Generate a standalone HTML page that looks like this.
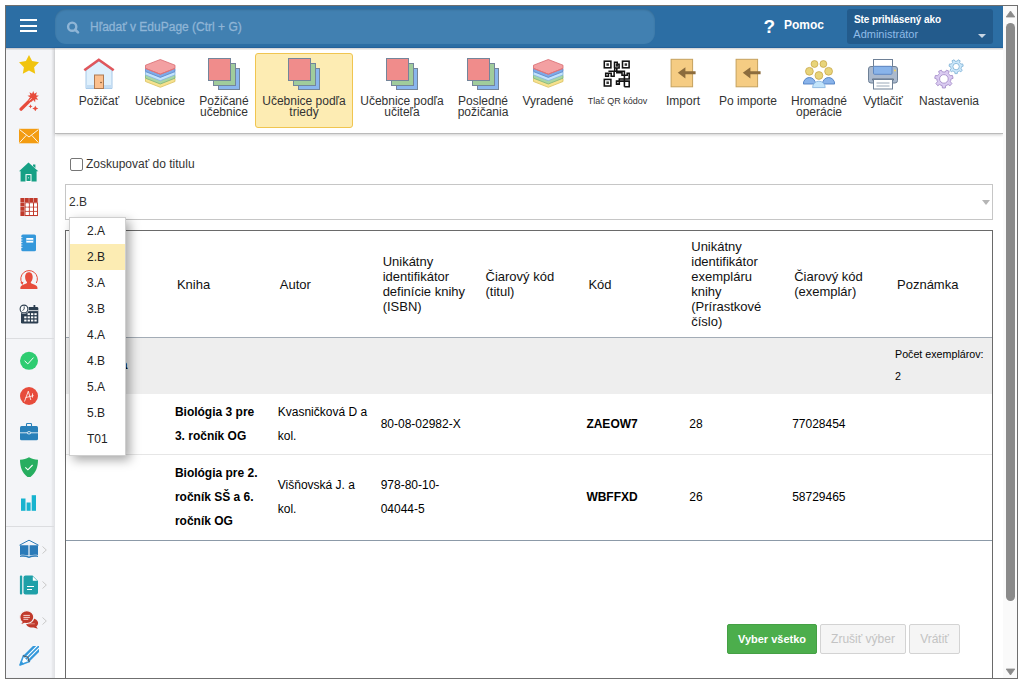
<!DOCTYPE html>
<html><head><meta charset="utf-8">
<style>
*{box-sizing:border-box;margin:0;padding:0}
html,body{width:1023px;height:684px;overflow:hidden;background:#fff;font-family:"Liberation Sans",sans-serif;color:#333}
.abs{position:absolute}
#frame{position:absolute;left:5px;top:5px;width:1013px;height:674px;border:1px solid #6f6f6f;overflow:hidden}
#hdr{position:absolute;left:6px;top:6px;width:997px;height:42px;background:#2c6ea4;border-bottom:1px solid #2565a0;box-shadow:0 1px 1px rgba(0,0,0,0.18)}
.ham{position:absolute;left:14px;width:17px;height:2px;background:#fff}
#search{position:absolute;left:55px;top:9px;width:600px;height:35px;border-radius:11px;background:#4180b1;box-shadow:inset 0 1px 2px rgba(0,0,0,0.15)}
#search .ph{position:absolute;left:35px;top:10.7px;font-size:12px;color:#8fb5d6;-webkit-text-stroke:0.3px #8fb5d6;white-space:nowrap}
#help{position:absolute;left:763.5px;top:15.7px;font-size:19px;line-height:22px;font-weight:bold;color:#fff}
#pomoc{position:absolute;left:784px;top:18px;font-size:12px;font-weight:bold;color:#fff}
#user{position:absolute;left:847px;top:9px;width:146px;height:35px;background:#235b8c;border-radius:3px}
#user .l1{position:absolute;left:7px;top:5px;font-size:10px;font-weight:bold;color:#fff;white-space:nowrap;letter-spacing:-0.08px}
#user .l2{position:absolute;left:6.3px;top:19px;font-size:11px;color:#90bbe8;white-space:nowrap}
#user .tri{position:absolute;left:130.5px;top:24.5px;width:0;height:0;border-left:4px solid transparent;border-right:4px solid transparent;border-top:4px solid #c9d6e3}
#side{position:absolute;left:6px;top:48px;width:49px;height:630px;background:#f4f5f8;box-shadow:inset -2px 0 2px rgba(0,0,0,0.06);border-right:1px solid #e2e3e6}
.sic{position:absolute;left:13px;width:20px;height:20px}
.sep{position:absolute;left:0;width:48px;height:1px;background:#dcdde0}
.chev{position:absolute;left:36px;width:5px;height:8px}
#tb{position:absolute;left:55px;top:48px;width:948px;height:86px;background:#fff;border-bottom:1px solid #bababa;box-shadow:0 1px 3px rgba(0,0,0,0.2)}
.ti{position:absolute;top:48px;height:85px;text-align:center;font-size:12px;line-height:11px;color:#333}
.ti svg{position:absolute;top:10px;left:50%;margin-left:-16px;width:32px;height:32px}
.ti .lb{position:absolute;left:0;right:0;top:48px;white-space:nowrap}
.sel{background:#fdecb3;border:1px solid #f0c550;border-radius:3px}
#chk{position:absolute;left:70px;top:158px;width:13px;height:13px;border:1px solid #767676;border-radius:2px;background:#fff}
#chkl{position:absolute;left:86px;top:157px;font-size:12px;color:#333}
#select{position:absolute;left:65px;top:184px;width:928px;height:36px;border:1px solid #c6c6c6;background:#fff}
#select .v{position:absolute;left:3px;top:10px;font-size:12px;color:#333}
#select .tri{position:absolute;left:916px;top:15px;width:0;height:0;border-left:4px solid transparent;border-right:4px solid transparent;border-top:5px solid #b5b5b5}
#panel{position:absolute;left:65px;top:230px;width:928px;height:460px;border:1px solid #6a6a6a}
table{border-collapse:collapse;table-layout:fixed;width:926px}
th{font-weight:normal;font-size:13px;line-height:15px;color:#111;text-align:left;padding:8px 8px 8px 8px;vertical-align:middle;height:106px;border-bottom:1px solid #a3acb6}
td{white-space:nowrap;font-size:12px;line-height:24px;color:#000;padding:6px 4px 6px 6px;vertical-align:middle;border-bottom:1px solid #e6e6e6}
tr.grp td{background:#eeeeee;border-bottom:0;font-size:10.7px;line-height:22px;white-space:nowrap;padding-top:5px;padding-bottom:7px}
tr.last td{border-bottom:1px solid #8c9aa8;padding-bottom:7px}
b{font-weight:bold}
#dd{position:absolute;left:69px;top:217px;width:57px;height:239px;background:#fff;border:1px solid #cfcfcf;box-shadow:4px 4px 10px rgba(0,0,0,0.35)}
#dd div{height:26px;line-height:26px;padding-left:17px;font-size:12px;color:#222}
#dd div.hl{background:#fcecb3}
.btn{position:absolute;top:624px;height:30px;font-size:12px;line-height:28px;text-align:center;border-radius:2px}
#scroll{position:absolute;left:1003px;top:6px;width:14px;height:672px;background:#fafafa}
</style></head><body>
<div id="frame"></div>
<div id="clip" style="position:absolute;left:0;top:0;width:1023px;height:684px;clip-path:inset(6px 6px 6px 6px)">
<div id="hdr">
  <div class="ham" style="top:13px"></div>
  <div class="ham" style="top:18.5px"></div>
  <div class="ham" style="top:24px"></div>
</div>
<div id="search">
  <svg class="abs" style="left:11px;top:11px" width="16" height="16" viewBox="0 0 16 16"><circle cx="6.2" cy="6.7" r="4.1" fill="none" stroke="#8fb5d6" stroke-width="2.4"/><line x1="9.2" y1="9.7" x2="12" y2="12.4" stroke="#8fb5d6" stroke-width="2.6" stroke-linecap="round"/></svg>
  <div class="ph">Hľadať v EduPage (Ctrl + G)</div>
</div>
<div id="help">?</div>
<div id="pomoc">Pomoc</div>
<div id="user"><div class="l1">Ste prihlásený ako</div><div class="l2">Administrátor</div><div class="tri"></div></div>

<div id="side"></div>
<div id="sidei" style="position:absolute;left:6px;top:0;width:49px;height:684px">
<svg class="sic" style="top:55px" viewBox="0 0 20 20"><path fill="#f1c40f" d="M10,0 L13.1,6 L20,7.3 L15.1,12.2 L16.2,18.7 L10,15.6 L3.8,18.7 L4.9,12.2 L0,7.3 L6.9,6 Z"/></svg>
<svg class="sic" style="top:90.5px" viewBox="0 0 20 20"><g fill="#e74c3c"><path d="M14.20,0.00 L15.29,2.79 L17.93,1.36 L16.97,4.20 L19.91,4.79 L17.35,6.36 L19.22,8.70 L16.26,8.25 L16.18,11.25 L14.20,9.00 L12.22,11.25 L12.14,8.25 L9.18,8.70 L11.05,6.36 L8.49,4.79 L11.43,4.20 L10.47,1.36 L13.11,2.79 Z"/><path d="M11.5,13.2 l0.6,1.5 1.5,0.6 -1.5,0.6 -0.6,1.5 -0.6,-1.5 -1.5,-0.6 1.5,-0.6 Z"/><path d="M16.3,14.5 l0.9,2.1 2.1,0.9 -2.1,0.9 -0.9,2.1 -0.9,-2.1 -2.1,-0.9 2.1,-0.9 Z"/></g><line x1="2.1" y1="18.2" x2="12" y2="8.3" stroke="#e74c3c" stroke-width="3.3" stroke-linecap="round"/><path d="M10.2,9.6 L12.6,7.2" stroke="#fff" stroke-width="0.8"/></svg>
<svg class="sic" style="top:125.7px" viewBox="0 0 20 20"><rect x="0" y="2.8" width="20" height="14.5" fill="#f39c12"/><path d="M0.6,3.6 L10,11 L19.4,3.6 M0.6,16.6 L7.3,9.3 M19.4,16.6 L12.7,9.3" fill="none" stroke="#fff" stroke-width="0.9"/></svg>
<svg class="sic" style="top:161.5px" viewBox="0 0 20 20"><path fill="#16a085" d="M9.5,0.5 L19.3,9.3 L17.6,9.3 L17.6,19.5 L1.6,19.5 L1.6,9.3 L0,9.3 Z M14,2.5 L16.4,2.5 L16.4,6 L14,4 Z"/><rect x="7" y="12.6" width="5" height="6.9" fill="none" stroke="#fff" stroke-width="1"/><circle cx="9.5" cy="15.8" r="0.5" fill="#fff"/></svg>
<svg class="sic" style="top:197.4px" viewBox="0 0 20 20"><g fill="#c0392b"><rect x="1.4" y="1" width="4" height="4"/><rect x="5.8" y="1" width="4" height="4"/><rect x="10.2" y="1" width="4" height="4"/><rect x="14.6" y="1" width="4" height="4"/><rect x="1.4" y="5.4" width="4" height="4"/><rect x="1.4" y="9.8" width="4" height="4"/><rect x="1.4" y="14.2" width="4" height="4.8"/></g><g fill="none" stroke="#c0392b" stroke-width="1.1"><rect x="6.1" y="5.8" width="12.3" height="12.7"/><path d="M10.2,5.8 V18.5 M14.5,5.8 V18.5 M6.1,10 H18.4 M6.1,14.3 H18.4"/></g><g fill="#fff"><rect x="6.8" y="6.5" width="3" height="3"/><rect x="11" y="6.5" width="3" height="3"/><rect x="15" y="6.5" width="3" height="3"/><rect x="6.8" y="10.8" width="3" height="3"/><rect x="11" y="10.8" width="3" height="3"/><rect x="15" y="10.8" width="3" height="3"/><rect x="6.8" y="15" width="3" height="3"/><rect x="11" y="15" width="3" height="3"/><rect x="15" y="15" width="3" height="3"/></g></svg>
<svg class="sic" style="top:233px" viewBox="0 0 20 20"><rect x="2.3" y="1.5" width="14.7" height="16.8" rx="1.6" fill="#3498db"/><rect x="7.3" y="5" width="7" height="4.6" fill="#fff"/><path d="M7.3,7.3 H14.3" stroke="#3498db" stroke-width="0.9"/><path d="M1.5,4.5 H3.5 M1.5,7 H3.5 M1.5,9.5 H3.5 M1.5,12 H3.5 M1.5,14.5 H3.5" stroke="#fff" stroke-width="0.7"/></svg>
<svg class="sic" style="top:269px" viewBox="0 0 20 20"><path fill="#e74c3c" d="M9.9,3.2 C12.6,3.2 13.7,5.5 13.7,8 C13.7,10.3 12.9,12 11.8,13.1 C11.6,13.6 11.8,14.1 12.5,14.5 C15.3,15.4 17.5,16.5 18.2,17.8 C18.5,18.5 18.5,19.3 18.4,20 L1.4,20 C1.3,19.3 1.3,18.5 1.6,17.8 C2.3,16.5 4.5,15.4 7.3,14.5 C8,14.1 8.2,13.6 8,13.1 C6.9,12 6.1,10.3 6.1,8 C6.1,5.5 7.2,3.2 9.9,3.2 Z"/><path d="M3,14.2 A8.3,8.3 0 1,1 17.3,14" fill="none" stroke="#e74c3c" stroke-width="1"/><path d="M1.3,13.5 L3.5,16 L4.5,12.8 Z" fill="#e74c3c"/></svg>
<svg class="sic" style="top:304.4px" viewBox="0 0 20 20"><rect x="2" y="3" width="17.3" height="16.6" rx="1.3" fill="#2c3e50"/><rect x="14.5" y="1" width="1.8" height="3.2" fill="#2c3e50"/><path d="M8,6.6 H19.3" stroke="#fff" stroke-width="0.8"/><g fill="#fff"><rect x="8.6" y="9.2" width="2.3" height="1.9"/><rect x="12.0" y="9.2" width="2.3" height="1.9"/><rect x="15.4" y="9.2" width="2.3" height="1.9"/><rect x="5.2" y="12.4" width="2.3" height="1.9"/><rect x="8.6" y="12.4" width="2.3" height="1.9"/><rect x="12.0" y="12.4" width="2.3" height="1.9"/><rect x="15.4" y="12.4" width="2.3" height="1.9"/><rect x="5.2" y="15.6" width="2.3" height="1.9"/><rect x="8.6" y="15.6" width="2.3" height="1.9"/><rect x="12.0" y="15.6" width="2.3" height="1.9"/><rect x="15.4" y="15.6" width="2.3" height="1.9"/></g><circle cx="5" cy="5" r="4.9" fill="#fff"/><circle cx="5" cy="5" r="3.9" fill="#fff" stroke="#2c3e50" stroke-width="1.1"/><path d="M5.2,2.4 V5 L3.6,6.8" fill="none" stroke="#2c3e50" stroke-width="0.9"/></svg>
<div class="sep" style="top:338px"></div>
<svg class="sic" style="top:350.8px" viewBox="0 0 20 20"><circle cx="10" cy="9.8" r="9" fill="#2ecc71"/><path d="M5.6,9.8 L8.8,12.9 L14.5,6.6" fill="none" stroke="#fff" stroke-width="1"/></svg>
<svg class="sic" style="top:386.8px" viewBox="0 0 20 20"><circle cx="10" cy="9" r="9" fill="#e74c3c"/><path d="M5.5,14.5 L9.3,4.2 L11.8,13 M6.6,10.6 C9,9.8 11.5,9.5 14.6,8.6 M13.5,6.4 V10.6" fill="none" stroke="#fff" stroke-width="0.8"/></svg>
<svg class="sic" style="top:422px" viewBox="0 0 20 20"><path d="M7.5,4 V2.3 Q7.5,1.5 8.3,1.5 H11.7 Q12.5,1.5 12.5,2.3 V4" fill="none" stroke="#2980b9" stroke-width="1.1"/><rect x="1" y="4" width="18" height="14.3" rx="1.5" fill="#2980b9"/><path d="M1,10.8 H19" stroke="#fff" stroke-width="0.8"/><ellipse cx="10" cy="10.8" rx="1.8" ry="1.2" fill="#2980b9" stroke="#fff" stroke-width="0.8"/></svg>
<svg class="sic" style="top:456.5px" viewBox="0 0 20 20"><path fill="#27ae60" d="M10,0.2 C12.6,1.8 15.6,2.6 19,2.8 C19,10.5 16.7,16.8 10,21 C3.3,16.8 1,10.5 1,2.8 C4.4,2.6 7.4,1.8 10,0.2 Z"/><path d="M6.3,10.3 L8.9,12.8 L13.6,8" fill="none" stroke="#fff" stroke-width="1.1"/></svg>
<svg class="sic" style="top:492.8px" viewBox="0 0 20 20"><g fill="#17b3cf"><rect x="2" y="5.5" width="4.5" height="12.3"/><rect x="7.6" y="9.5" width="4" height="8.3"/><rect x="12.7" y="2.2" width="4.3" height="15.6"/></g></svg>
<div class="sep" style="top:526px"></div>
<svg class="sic" style="top:538.8px" viewBox="0 0 20 20"><path d="M0.5,6.2 L10,1.2 L19.5,6.2" fill="none" stroke="#2a7ab8" stroke-width="1"/><path fill="#2a7ab8" d="M1,6.2 H9.4 V16.5 C6.5,15.5 3.5,15.5 1,16 Z M10.6,6.2 H19 V16 C16.5,15.5 13.5,15.5 10.6,16.5 Z"/><path fill="#2a7ab8" d="M1,16.8 C4,16 7,16.2 10,17.5 C13,16.2 16,16 19,16.8 V18 C16,17.5 13,17.6 10,19 C7,17.6 4,17.5 1,18 Z"/></svg>
<svg class="sic" style="top:574.5px" viewBox="0 0 20 20"><rect x="0.9" y="0.5" width="2.3" height="19" rx="1" fill="#1fa0a8"/><path fill="#1fa0a8" d="M6.5,0.5 H13.5 L19,6 V17.5 Q19,19.5 17,19.5 H6.5 Q4.5,19.5 4.5,17.5 V2.5 Q4.5,0.5 6.5,0.5 Z"/><path fill="#fff" d="M13.8,1.4 L18.2,5.8 H13.8 Z"/><path d="M8,11.5 H15 M8,14.5 H13" stroke="#fff" stroke-width="1.2"/></svg>
<svg class="sic" style="top:610px" viewBox="0 0 20 20"><path fill="#c0392b" d="M19.1,13.1 C19.1,14.6 18.4,15.8 17.3,16.6 L18.8,18.8 L14.6,17.5 C14.1,17.6 13.6,17.6 13,17.6 C9.6,17.6 6.9,15.6 6.9,13.1 C6.9,10.6 9.6,8.6 13,8.6 C16.4,8.6 19.1,10.6 19.1,13.1 Z"/><path fill="#c0392b" stroke="#f4f5f8" stroke-width="1.1" d="M7.8,0.6 C11.8,0.6 14.8,3.5 14.8,7.1 C14.8,10.7 11.8,13.6 7.8,13.6 C7.1,13.6 6.4,13.5 5.8,13.3 L0.8,15.2 L3,12 C1.6,10.8 0.8,9.1 0.8,7.1 C0.8,3.5 3.8,0.6 7.8,0.6 Z"/><path d="M4.4,5.4 H10.9 M4.4,7.4 H10.9 M4.4,9.3 H9.3" stroke="#f6d5d2" stroke-width="1"/><path d="M9,13.8 H15.8" stroke="#e6a49c" stroke-width="0.8"/></svg>
<svg class="sic" style="top:645.5px" viewBox="0 0 20 20"><g transform="translate(0.4,19.6) rotate(-45)"><path d="M1,0 L10,-4.2 L10,4.2 Z" fill="#fff" stroke="#3a9ee0" stroke-width="1.6" stroke-linejoin="round"/><path d="M0,0 L4.5,-2.2 L4.5,2.2 Z" fill="#3498db"/><rect x="10" y="-4.3" width="19" height="8.6" fill="#3498db"/><path d="M10,-1.4 H29 M10,1.4 H29" stroke="#fff" stroke-width="1.1"/><path d="M9.5,-4.4 L12,0 L9.5,4.4" fill="none" stroke="#555" stroke-width="1"/></g></svg>
<svg class="chev" style="top:546px" viewBox="0 0 5 8"><path d="M0.5,0.5 L4.3,4 L0.5,7.5" fill="none" stroke="#c9c9c9" stroke-width="1"/></svg>
<svg class="chev" style="top:581px" viewBox="0 0 5 8"><path d="M0.5,0.5 L4.3,4 L0.5,7.5" fill="none" stroke="#c9c9c9" stroke-width="1"/></svg>
<svg class="chev" style="top:616.5px" viewBox="0 0 5 8"><path d="M0.5,0.5 L4.3,4 L0.5,7.5" fill="none" stroke="#c9c9c9" stroke-width="1"/></svg>
</div>

<div id="tb"></div>
<!-- toolbar items -->
<svg width="0" height="0" style="position:absolute">
 <defs>
  <g id="sq">
   <rect x="10.5" y="10.5" width="21" height="21" fill="#8ab6ee" stroke="#74859a" stroke-width="1"/>
   <rect x="5.5" y="5.5" width="22" height="22" fill="#a0cc9c" stroke="#74859a" stroke-width="1"/>
   <rect x="0.5" y="0.5" width="22" height="22" fill="#f08c8b" stroke="#74859a" stroke-width="1"/>
  </g>
  <g id="stack">
   <path d="M1.5,20.5 L16.3,14.8 L31,20.5 L31,23.5 L16.3,29.3 L1.5,23.5 Z" fill="#f7e28e" stroke="#d9c060" stroke-width="0.8"/>
   <path d="M1.5,17.2 L16.3,11.5 L31,17.2 L31,20.2 L16.3,26 L1.5,20.2 Z" fill="#a8d6a4" stroke="#7fb27a" stroke-width="0.8"/>
   <path d="M1.5,13.9 L16.3,8.2 L31,13.9 L31,16.9 L16.3,22.7 L1.5,16.9 Z" fill="#c4e3fb" stroke="#83b3e0" stroke-width="0.8"/>
   <path d="M1.5,10.6 L16.3,4.9 L31,10.6 L31,13.6 L16.3,19.4 L1.5,13.6 Z" fill="#7eaae8" stroke="#5a87c8" stroke-width="0.8"/>
   <path d="M1.5,7.2 L16.3,1.5 L31,7.2 L31,10.4 L16.3,16.2 L1.5,10.4 Z" fill="#f3a0a2" stroke="#d8696e" stroke-width="0.8"/>
   <path d="M1.5,10.4 L16.3,16.2 L31,10.4" fill="none" stroke="#e07478" stroke-width="1"/>
  </g>
  <g id="imp">
   <rect x="4.1" y="1.3" width="21.5" height="27.5" fill="#f5cc83" stroke="#c5a15d" stroke-width="1"/>
   <path d="M10.8,14.8 L18.4,9.3 L18.4,13.3 L28.6,13.3 L28.6,16.3 L18.4,16.3 L18.4,20.5 Z" fill="#8c6c3d"/>
  </g>
 </defs>
</svg>
<div class="ti" style="left:72px;width:54px">
 <svg viewBox="0 0 32 32"><path d="M3,12 L16,3 L29,12 L29,30.5 L3,30.5 Z" fill="#dff0fc" stroke="#a6c8e8" stroke-width="1"/><rect x="3.5" y="27" width="25" height="3.2" fill="#c3ddf4"/><path d="M1.3,12.3 L15.8,1.8 L30.7,12.3" fill="none" stroke="#e0575c" stroke-width="2.6"/><rect x="11.5" y="17" width="9" height="13.5" fill="#fbc08e" stroke="#ae7a52" stroke-width="1"/><circle cx="18" cy="24.5" r="0.8" fill="#7a5030"/></svg>
 <div class="lb">Požičať</div></div>
<div class="ti" style="left:128px;width:64px">
 <svg viewBox="0 0 32 32"><use href="#stack"/></svg>
 <div class="lb">Učebnice</div></div>
<div class="ti" style="left:192px;width:64px">
 <svg viewBox="0 0 32 32"><use href="#sq"/></svg>
 <div class="lb">Požičané<br>učebnice</div></div>
<div class="ti sel" style="left:255px;top:53px;width:98px;height:75px">
 <svg viewBox="0 0 32 32" style="top:4px"><use href="#sq"/></svg>
 <div class="lb" style="top:42px">Učebnice podľa<br>triedy</div></div>
<div class="ti" style="left:353px;width:98px">
 <svg viewBox="0 0 32 32"><use href="#sq"/></svg>
 <div class="lb">Učebnice podľa<br>učiteľa</div></div>
<div class="ti" style="left:451px;width:64px">
 <svg viewBox="0 0 32 32"><use href="#sq"/></svg>
 <div class="lb">Posledné<br>požičania</div></div>
<div class="ti" style="left:515px;width:66px">
 <svg viewBox="0 0 32 32"><use href="#stack"/></svg>
 <div class="lb">Vyradené</div></div>
<div class="ti" style="left:581px;width:73px">
 <svg viewBox="0 0 32 32"><g transform="translate(-1.2,-0.3)"><g fill="none" stroke="#111" stroke-width="1.55" stroke-linejoin="miter"><rect x="3.5" y="3.5" width="6.6" height="6.6"/><rect x="21.7" y="3.5" width="6.6" height="6.6"/><rect x="3.5" y="21.7" width="6.6" height="6.6"/><path d="M13.7,10.2 V4.5 H16.4 V6.5 H18.3 V10.2 H13.7 M13.9,10.2 V13.5 M16,10.2 V15 H21.2 V17.6 H26.4 V15.5 H28.4 V21.2 H18.5 V23.4 H15.7 V26.4 H18.5 V23.4 M7.6,13.5 H23.6 V29 M4.9,15.5 H7.6 V18.5 H4.9 Z M7.6,15.5 H10.4 V18.5 H13.3 V13.5 M18.5,23.4 H28.4 V29 H23.6"/></g><g fill="#333"><rect x="5.6" y="5.6" width="2.5" height="2.5"/><rect x="23.8" y="5.6" width="2.5" height="2.5"/><rect x="5.6" y="23.8" width="2.5" height="2.5"/></g><rect x="15" y="6" width="2.5" height="3" fill="#222"/></g></svg>
 <div class="lb" style="font-size:9px;top:48.4px">Tlač QR kódov</div></div>
<div class="ti" style="left:655px;width:56px">
 <svg viewBox="0 0 32 32"><use href="#imp"/></svg>
 <div class="lb">Import</div></div>
<div class="ti" style="left:713px;width:70px">
 <svg viewBox="0 0 32 32"><use href="#imp"/></svg>
 <div class="lb">Po importe</div></div>
<div class="ti" style="left:784px;width:70px">
 <svg viewBox="0 0 32 32"><g fill="#e8d47a" stroke="#c9a84c" stroke-width="0.8"><circle cx="11.5" cy="6" r="3.4"/><circle cx="20.4" cy="6" r="3.4"/><circle cx="6.4" cy="13.3" r="3.9"/><circle cx="25.6" cy="13.3" r="3.9"/></g><g stroke="#4c7ec2" stroke-width="0.9"><path d="M0.3,26 A6.1,6.5 0 0,1 12.5,26 Z" fill="#89b3ea"/><path d="M19.5,26 A6.1,6.5 0 0,1 31.7,26 Z" fill="#89b3ea"/></g><circle cx="15.9" cy="17.5" r="3.9" fill="#e8d47a" stroke="#c9a84c" stroke-width="0.8"/><path d="M9.6,29.6 A6.3,6.4 0 0,1 22.2,29.6 Z" fill="#c2e4fb" stroke="#8ab7e0" stroke-width="0.9"/></svg>
 <div class="lb">Hromadné<br>operácie</div></div>
<div class="ti" style="left:856px;width:54px">
 <svg viewBox="0 0 32 32"><rect x="6.5" y="1.5" width="19" height="8" fill="#fff" stroke="#6e8096" stroke-width="1"/><rect x="1.5" y="8.5" width="29" height="16.5" rx="2.5" fill="#aab9cd" stroke="#6e8096" stroke-width="1"/><rect x="6.5" y="8.3" width="18.5" height="8" rx="1" fill="#89b4ea" stroke="#5f88c2" stroke-width="1"/><circle cx="28" cy="12.6" r="1" fill="#f3d35a"/><rect x="5" y="20.5" width="22" height="2" rx="1" fill="#5f6f82"/><rect x="6.5" y="21.5" width="19" height="9.5" fill="#fff" stroke="#6e8096" stroke-width="1"/><path d="M9.5,25 h13 M9.5,28 h13" stroke="#9aa8b8" stroke-width="1"/></svg>
 <div class="lb">Vytlačiť</div></div>
<div class="ti" style="left:913px;width:72px">
 <svg viewBox="0 0 32 32"><path fill-rule="evenodd" fill="#dacbf1" stroke="#a68fca" stroke-width="0.9" d="M10.90,13.90 L12.27,14.04 L13.51,12.08 L16.17,13.36 L15.41,15.55 L16.37,16.54 L17.12,17.69 L19.42,17.44 L20.08,20.32 L17.90,21.09 L17.72,22.46 L17.29,23.77 L18.92,25.40 L17.08,27.72 L15.12,26.49 L13.94,27.21 L12.64,27.68 L12.38,29.98 L9.42,29.98 L9.16,27.68 L7.86,27.21 L6.68,26.49 L4.72,27.72 L2.88,25.40 L4.51,23.77 L4.08,22.46 L3.90,21.09 L1.72,20.32 L2.38,17.44 L4.68,17.69 L5.43,16.54 L6.39,15.55 L5.63,13.36 L8.29,12.08 L9.53,14.04 Z M6.60,20.90 a4.30,4.30 0 1,0 8.60,0 a4.30,4.30 0 1,0 -8.60,0 Z"/><path fill-rule="evenodd" fill="#cbe7fa" stroke="#86b6d8" stroke-width="0.9" d="M23.10,3.20 L24.16,3.30 L25.11,1.79 L27.17,2.78 L26.58,4.47 L27.32,5.23 L27.90,6.13 L29.68,5.93 L30.19,8.15 L28.50,8.75 L28.36,9.80 L28.03,10.81 L29.29,12.08 L27.87,13.86 L26.35,12.91 L25.44,13.47 L24.44,13.83 L24.24,15.61 L21.96,15.61 L21.76,13.83 L20.76,13.47 L19.85,12.91 L18.33,13.86 L16.91,12.08 L18.17,10.81 L17.84,9.80 L17.70,8.75 L16.01,8.15 L16.52,5.93 L18.30,6.13 L18.88,5.23 L19.62,4.47 L19.03,2.78 L21.09,1.79 L22.04,3.30 Z M19.90,8.60 a3.20,3.20 0 1,0 6.40,0 a3.20,3.20 0 1,0 -6.40,0 Z"/></svg>
 <div class="lb">Nastavenia</div></div>


<div style="position:absolute;left:6px;top:48px;width:997px;height:2px;background:linear-gradient(rgba(0,0,0,0.19),rgba(0,0,0,0.04))"></div>
<div id="chk"></div>
<div id="chkl">Zoskupovať do titulu</div>
<div id="select"><div class="v">2.B</div><div class="tri"></div></div>

<div id="panel">
<table>
<colgroup><col><col><col><col><col><col><col><col><col></colgroup>
<tr><th></th><th>Kniha</th><th>Autor</th><th>Unikátny identifikátor definície knihy (ISBN)</th><th>Čiarový kód (titul)</th><th>Kód</th><th>Unikátny identifikátor exempláru knihy (Prírastkové číslo)</th><th>Čiarový kód (exemplár)</th><th>Poznámka</th></tr>
<tr class="grp"><td colspan="8" style="font-size:12px;font-weight:bold;padding-left:14px">Biológia</td><td>Počet exemplárov:<br>2</td></tr>
<tr><td></td><td><b>Biológia 3 pre<br>3. ročník OG</b></td><td>Kvasničková D a<br>kol.</td><td>80-08-02982-X</td><td></td><td><b>ZAEOW7</b></td><td>28</td><td>77028454</td><td></td></tr>
<tr class="last"><td></td><td><b>Biológia pre 2.<br>ročník SŠ a 6.<br>ročník OG</b></td><td>Višňovská J. a<br>kol.</td><td>978-80-10-<br>04044-5</td><td></td><td><b>WBFFXD</b></td><td>26</td><td>58729465</td><td></td></tr>
</table>
</div>

<div id="dd">
<div>2.A</div><div class="hl">2.B</div><div>3.A</div><div>3.B</div><div>4.A</div><div>4.B</div><div>5.A</div><div>5.B</div><div>T01</div>
</div>

<div class="btn" style="left:727px;width:90px;background:#4cae4c;color:#fff;font-weight:bold;font-size:11px;border:1px solid #45a045">Vyber všetko</div>
<div class="btn" style="left:820px;width:86px;background:#f5f5f5;color:#c3c3c3;border:1px solid #d3d3d3">Zrušiť výber</div>
<div class="btn" style="left:909px;width:51px;background:#f5f5f5;color:#c3c3c3;border:1px solid #d3d3d3">Vrátiť</div>

<div id="scroll">
  <svg class="abs" style="left:2px;top:3.5px" width="11" height="8" viewBox="0 0 11 8"><path d="M5.5,1 L9.8,7 L1.2,7 Z" fill="#8a8a8a" stroke="#8a8a8a" stroke-width="0.8" stroke-linejoin="round"/></svg>
  <div class="abs" style="left:3px;top:17px;width:9px;height:578px;border-radius:5px;background:#8a8a8a"></div>
  <svg class="abs" style="left:2px;top:661.5px" width="11" height="8" viewBox="0 0 11 8"><path d="M1.2,1 L9.8,1 L5.5,7 Z" fill="#8a8a8a" stroke="#8a8a8a" stroke-width="0.8" stroke-linejoin="round"/></svg>
</div>
</div>
</body></html>
